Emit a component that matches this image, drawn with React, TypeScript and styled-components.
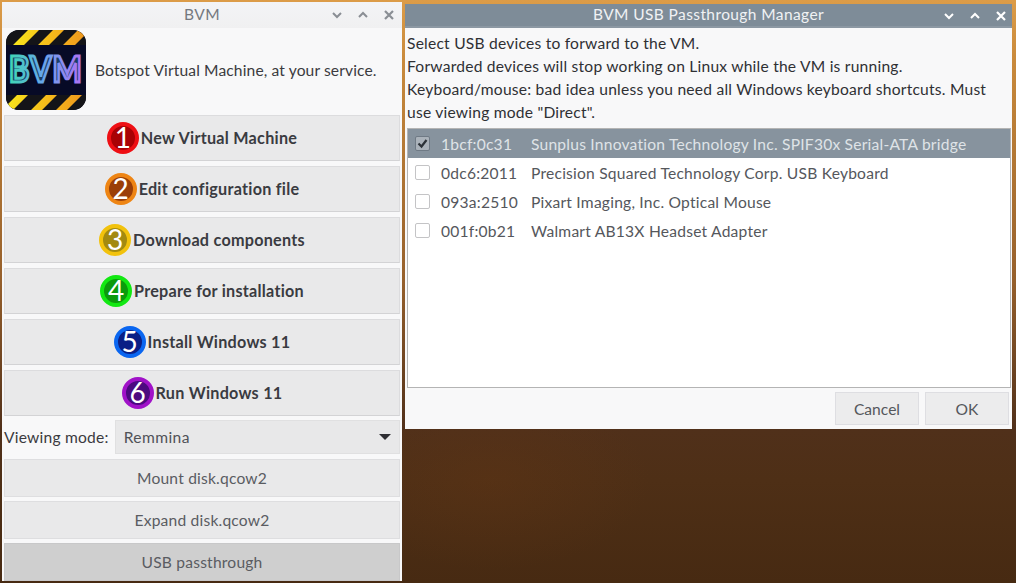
import React from "react";
import styled, { createGlobalStyle } from "styled-components";

const GlobalStyle = createGlobalStyle`
  html, body {
    margin: 0;
    padding: 0;
    width: 1016px;
    height: 583px;
    overflow: hidden;
  }
  body {
    font-family: "Lato", "Open Sans", sans-serif;
    font-size: 15.6px;
    color: #3b3b40;
  }
`;

const Desktop = styled.div`
  width: 1016px;
  height: 583px;
  box-sizing: border-box;
  padding: 2px 4px 2px 2px;
  display: flex;
  gap: 3px;
  align-items: flex-start;
  background:
    radial-gradient(ellipse 160px 90px at 490px 480px, rgba(100, 54, 20, 0.35), transparent),
    linear-gradient(180deg, #dc9c48 0, #c98a3c 60px, #96602c 280px, #50301a 430px, #4e2f16 480px, #472a12 583px);
`;

const Window = styled.div<{ $height: number; $width: number; $top?: number }>`
  width: ${(p) => p.$width}px;
  height: ${(p) => p.$height}px;
  margin-top: ${(p) => p.$top ?? 0}px;
  flex: none;
  background: #f8f8f9;
  display: flex;
  flex-direction: column;
`;

const TitleBar = styled.div<{ $active?: boolean }>`
  height: ${(p) => (p.$active ? 24 : 26)}px;
  flex: none;
  position: relative;
  display: flex;
  align-items: center;
  justify-content: center;
  padding-bottom: 2px;
  font-size: 15.5px;
  letter-spacing: 0.4px;
  color: ${(p) => (p.$active ? "#f0f2f4" : "#74787e")};
  background: ${(p) => (p.$active ? "#7e8c98" : "linear-gradient(180deg, #f3f4f6, #f0f0f1)")};
  border-bottom: ${(p) => (p.$active ? "2px solid #8c98a3" : "none")};
  box-sizing: border-box;
`;

const TitleButtons = styled.div<{ $active?: boolean }>`
  position: absolute;
  right: ${(p) => (p.$active ? 4 : 6)}px;
  top: ${(p) => (p.$active ? 6 : 7)}px;
  display: flex;
  gap: 12px;
  color: ${(p) => (p.$active ? "#ffffff" : "#8a8e94")};
`;

const MainBody = styled.div`
  flex: 1;
  display: flex;
  flex-direction: column;
  padding: 0 2px;
`;

const Header = styled.div`
  height: 87px;
  flex: none;
  box-sizing: border-box;
  display: flex;
  align-items: center;
  gap: 9px;
  padding: 0 0 3px 2px;
  font-size: 15.6px;
  letter-spacing: 0.12px;
`;

const ButtonStack = styled.div`
  display: flex;
  flex-direction: column;
  gap: 5px;
`;

const BigButton = styled.div`
  height: 46px;
  box-sizing: border-box;
  padding-bottom: 1px;
  background: #e9e9ea;
  border: 1px solid #dcdcde;
  border-bottom-color: #d3d3d5;
  display: flex;
  align-items: center;
  justify-content: center;
  font-weight: 700;
  font-size: 16.2px;
  letter-spacing: 0.25px;
  color: #3a3b41;
`;

const Badge = styled.span<{ $ring: string; $core: string }>`
  width: 32px;
  height: 32px;
  margin-right: 2px;
  flex: none;
  border-radius: 50%;
  box-sizing: border-box;
  border: 4px solid ${(p) => p.$ring};
  background: ${(p) => p.$core};
  color: #ffffff;
  font-size: 28px;
  font-weight: 400;
  line-height: 23px;
  text-align: center;
  letter-spacing: 0;
`;

const ModeRow = styled.div`
  height: 34px;
  margin-top: 4px;
  display: flex;
  align-items: center;
  gap: 6px;
  letter-spacing: 0.22px;
`;

const Select = styled.div`
  flex: 1;
  height: 34px;
  box-sizing: border-box;
  background: #e8e8e9;
  border: 1px solid #e0e0e1;
  display: flex;
  align-items: center;
  justify-content: space-between;
  padding: 0 8px 0 8px;
  letter-spacing: 0.4px;
  color: #505258;
`;

const Caret = styled.span`
  width: 0;
  height: 0;
  border-left: 6px solid transparent;
  border-right: 6px solid transparent;
  border-top: 6px solid #2e2e33;
`;

const SmallStack = styled.div`
  display: flex;
  flex-direction: column;
  gap: 4px;
  margin-top: 5px;
`;

const SmallButton = styled.div<{ $pressed?: boolean }>`
  height: 38px;
  box-sizing: border-box;
  background: ${(p) => (p.$pressed ? "#cfcfcf" : "#e9e9ea")};
  border: 1px solid ${(p) => (p.$pressed ? "#c8c8c9" : "#dedee0")};
  display: flex;
  align-items: center;
  justify-content: center;
  letter-spacing: 0.2px;
  color: #5a5c62;
`;

const DialogBody = styled.div`
  flex: 1;
  display: flex;
  flex-direction: column;
  padding: 0 1px 0 2px;
`;

const Intro = styled.div`
  padding-top: 4px;
  height: 100px;
  box-sizing: border-box;
  line-height: 23px;
  letter-spacing: 0.22px;
  color: #2f3034;
`;

const DeviceList = styled.div`
  height: 260px;
  flex: none;
  box-sizing: border-box;
  background: #ffffff;
  border: 1px solid #b4b4b4;
  display: flex;
  flex-direction: column;
`;

const DeviceRow = styled.div<{ $selected?: boolean }>`
  height: 29px;
  flex: none;
  display: flex;
  align-items: center;
  padding-left: 7px;
  letter-spacing: 0.22px;
  background: ${(p) => (p.$selected ? "#87939e" : "transparent")};
  color: ${(p) => (p.$selected ? "#dfe3e7" : "#55575c")};
`;

const Check = styled.span<{ $checked?: boolean }>`
  width: 15px;
  height: 15px;
  box-sizing: border-box;
  border: 1px solid ${(p) => (p.$checked ? "#6f7a85" : "#c4c4c6")};
  border-radius: 2px;
  background: ${(p) => (p.$checked ? "#aab2ba" : "#ffffff")};
  display: flex;
  align-items: center;
  justify-content: center;
  flex: none;
`;

const DeviceId = styled.span`
  margin-left: 11px;
  width: 90px;
  flex: none;
`;

const Footer = styled.div`
  flex: 1;
  display: flex;
  justify-content: flex-end;
  align-items: flex-start;
  gap: 6px;
  padding: 4px 2px 0 0;
`;

const DialogButton = styled.div`
  width: 84px;
  height: 33px;
  box-sizing: border-box;
  background: #ececed;
  border: 1px solid #dedee2;
  display: flex;
  align-items: center;
  justify-content: center;
  color: #55575c;
`;

const Chrome = ({ active }: { active?: boolean }) => (
  <TitleButtons $active={active}>
    <svg width="14" height="12" viewBox="0 0 14 12" fill="none" stroke="currentColor" strokeWidth="2">
      <path d="M3 4l4 4 4-4" />
    </svg>
    <svg width="14" height="12" viewBox="0 0 14 12" fill="none" stroke="currentColor" strokeWidth="2">
      <path d="M3 8l4-4 4 4" />
    </svg>
    <svg width="14" height="12" viewBox="0 0 14 12" fill="none" stroke="currentColor" strokeWidth="2.2">
      <path d="M3 2l8 8M11 2l-8 8" />
    </svg>
  </TitleButtons>
);

const Logo = () => (
  <svg width="80" height="80" viewBox="0 0 80 80">
    <defs>
      <linearGradient id="bvmText" x1="0" x2="1" y1="0" y2="0">
        <stop offset="0" stopColor="#3fd6b4" />
        <stop offset="0.45" stopColor="#66a6ea" />
        <stop offset="1" stopColor="#b070f4" />
      </linearGradient>
      <linearGradient id="hazard" x1="0" x2="1" y1="0" y2="0">
        <stop offset="0" stopColor="#f8e61c" />
        <stop offset="0.55" stopColor="#f6b81a" />
        <stop offset="1" stopColor="#ee961e" />
      </linearGradient>
      <clipPath id="logoClip">
        <rect width="80" height="80" rx="13" />
      </clipPath>
    </defs>
    <g clipPath="url(#logoClip)">
      <rect width="80" height="80" fill="#070a26" />
      <rect y="0" width="80" height="15" fill="#141418" />
      <rect y="65" width="80" height="15" fill="#141418" />
      <g fill="url(#hazard)">
        <path d="M7 15L22 0h11L18 15zM32 15L47 0h11L43 15zM57 15L72 0h8v4L69 15z" />
        <path d="M0 76L11 65h11L7 80H0zM25 80L40 65h11L36 80zM50 80L65 65h11L61 80zM74 80l6-6v6z" />
      </g>
    </g>
    <text
      x="40"
      y="46"
      transform="scale(1 1.14)"
      textAnchor="middle"
      fontFamily="Lato, sans-serif"
      fontWeight="700"
      fontSize="31"
      fill="#1b3d66"
      stroke="url(#bvmText)"
      strokeWidth="2.6"
      letterSpacing="1"
    >
      BVM
    </text>
  </svg>
);

const steps = [
  { n: "1", label: "New Virtual Machine", ring: "#ee0f14", core: "#a90205" },
  { n: "2", label: "Edit configuration file", ring: "#ee8514", core: "#9b3f08" },
  { n: "3", label: "Download components", ring: "#f2c20c", core: "#a38a10" },
  { n: "4", label: "Prepare for installation", ring: "#12e812", core: "#0c9a0c" },
  { n: "5", label: "Install Windows 11", ring: "#0a66f0", core: "#0a1f86" },
  { n: "6", label: "Run Windows 11", ring: "#a012c8", core: "#4c0a80" },
];

const devices = [
  { id: "1bcf:0c31", name: "Sunplus Innovation Technology Inc. SPIF30x Serial-ATA bridge", checked: true },
  { id: "0dc6:2011", name: "Precision Squared Technology Corp. USB Keyboard" },
  { id: "093a:2510", name: "Pixart Imaging, Inc. Optical Mouse" },
  { id: "001f:0b21", name: "Walmart AB13X Headset Adapter" },
];

export default function App() {
  return (
    <>
      <GlobalStyle />
      <Desktop>
        <Window $width={400} $height={579}>
          <TitleBar>
            BVM
            <Chrome />
          </TitleBar>
          <MainBody>
            <Header>
              <Logo />
              Botspot Virtual Machine, at your service.
            </Header>
            <ButtonStack>
              {steps.map((s) => (
                <BigButton key={s.n}>
                  <Badge $ring={s.ring} $core={s.core}>
                    {s.n}
                  </Badge>
                  {s.label}
                </BigButton>
              ))}
            </ButtonStack>
            <ModeRow>
              Viewing mode:
              <Select>
                Remmina
                <Caret />
              </Select>
            </ModeRow>
            <SmallStack>
              <SmallButton>Mount disk.qcow2</SmallButton>
              <SmallButton>Expand disk.qcow2</SmallButton>
              <SmallButton $pressed>USB passthrough</SmallButton>
            </SmallStack>
          </MainBody>
        </Window>
        <Window $width={607} $height={425} $top={2}>
          <TitleBar $active>
            BVM USB Passthrough Manager
            <Chrome active />
          </TitleBar>
          <DialogBody>
            <Intro>
              Select USB devices to forward to the VM.
              <br />
              Forwarded devices will stop working on Linux while the VM is running.
              <br />
              Keyboard/mouse: bad idea unless you need all Windows keyboard shortcuts. Must
              <br />
              use viewing mode "Direct".
            </Intro>
            <DeviceList>
              {devices.map((d) => (
                <DeviceRow key={d.id} $selected={d.checked}>
                  <Check $checked={d.checked}>
                    {d.checked && (
                      <svg width="13" height="13" viewBox="0 0 13 13" fill="none" stroke="#2c3238" strokeWidth="2.2">
                        <path d="M2.5 6.5l3 3 5-6.5" />
                      </svg>
                    )}
                  </Check>
                  <DeviceId>{d.id}</DeviceId>
                  {d.name}
                </DeviceRow>
              ))}
            </DeviceList>
            <Footer>
              <DialogButton>Cancel</DialogButton>
              <DialogButton>OK</DialogButton>
            </Footer>
          </DialogBody>
        </Window>
      </Desktop>
    </>
  );
}
